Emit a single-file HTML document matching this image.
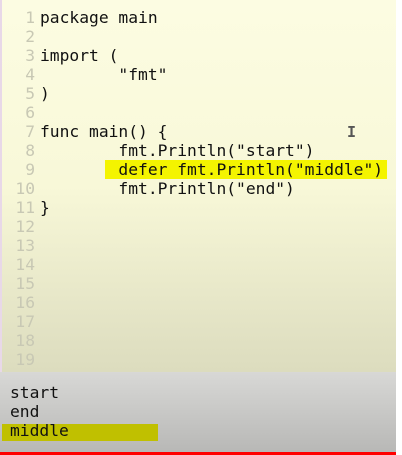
<!DOCTYPE html>
<html><head><style>
html,body{margin:0;padding:0;width:402px;height:455px;overflow:hidden;background:#fff;}
#ed{position:absolute;left:0;top:0;width:396px;height:372px;background:linear-gradient(#fcfce2,#f8f8d8 50%,#dcdcbe);border-left:2px solid #e8d8e8;box-sizing:border-box;}
.l{position:absolute;left:0;height:19px;font:16.3px/19px "DejaVu Sans Mono","Liberation Mono",monospace;color:#111;white-space:pre;}
.n{display:inline-block;width:33px;text-align:right;color:#c8c8b4;margin-right:5px;}
.hl{position:absolute;left:103px;top:160px;width:282px;height:19px;background:#f4f400;}
#out{position:absolute;left:0;top:372px;width:396px;height:80px;background:linear-gradient(#d8d8d6,#b8b8b6);}
.o{position:absolute;left:10px;font:16.3px/19px "DejaVu Sans Mono","Liberation Mono",monospace;color:#111;white-space:pre;}
#bar{position:absolute;left:0;top:452px;width:396px;height:3px;background:#f00;}
</style></head><body>
<div id="ed">
<div class="hl"></div>
<div class="l" style="top:8px"><span class="n">1</span>package main</div>
<div class="l" style="top:27px"><span class="n">2</span></div>
<div class="l" style="top:46px"><span class="n">3</span>import (</div>
<div class="l" style="top:65px"><span class="n">4</span>        "fmt"</div>
<div class="l" style="top:84px"><span class="n">5</span>)</div>
<div class="l" style="top:103px"><span class="n">6</span></div>
<div class="l" style="top:122px"><span class="n">7</span>func main() {</div>
<div class="l" style="top:141px"><span class="n">8</span>        fmt.Println("start")</div>
<div class="l" style="top:160px"><span class="n">9</span>        defer fmt.Println("middle")</div>
<div class="l" style="top:179px"><span class="n">10</span>        fmt.Println("end")</div>
<div class="l" style="top:198px"><span class="n">11</span>}</div>
<div class="l" style="top:217px"><span class="n">12</span></div>
<div class="l" style="top:236px"><span class="n">13</span></div>
<div class="l" style="top:255px"><span class="n">14</span></div>
<div class="l" style="top:274px"><span class="n">15</span></div>
<div class="l" style="top:293px"><span class="n">16</span></div>
<div class="l" style="top:312px"><span class="n">17</span></div>
<div class="l" style="top:331px"><span class="n">18</span></div>
<div class="l" style="top:350px"><span class="n">19</span></div>
<div style="position:absolute;left:345px;top:123px;font:bold 15px 'DejaVu Sans Mono',monospace;color:#555;">I</div>
</div>
<div id="out">
<div style="position:absolute;left:2px;top:52px;width:156px;height:17px;background:#c0c000;"></div>
<div class="o" style="top:11px">start</div>
<div class="o" style="top:30px">end</div>
<div class="o" style="top:49px">middle</div>
</div>
<div id="bar"></div>
</body></html>
